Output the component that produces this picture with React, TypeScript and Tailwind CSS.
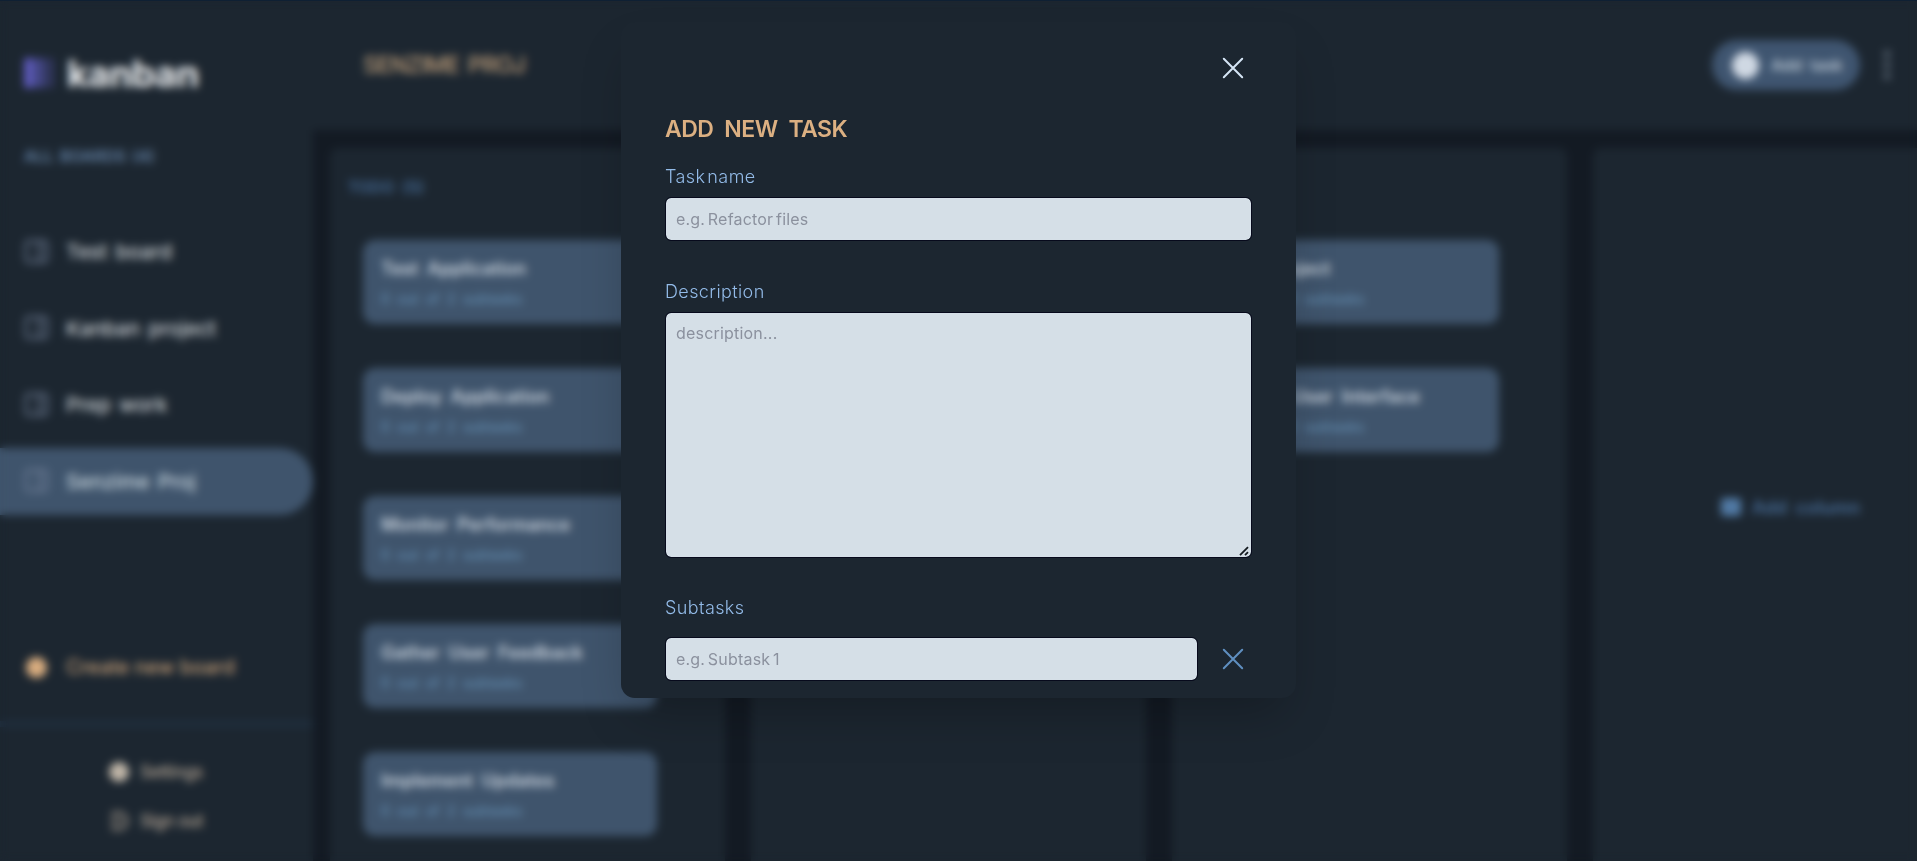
import type { ReactNode } from 'react';

const boards = ['Test board', 'Kanban project', 'Prep work', 'Senzime Proj'];

const todo = [
  'Test Application',
  'Deploy Application',
  'Monitor Performance',
  'Gather User Feedback',
  'Implement Updates',
];

const done = ['Test Project', 'Design User Interface'];

function BoardIcon() {
  return (
    <svg viewBox="0 0 24 24" className="h-6 w-6 shrink-0" fill="none" stroke="#75839c" strokeWidth="2">
      <rect x="2" y="1" width="21" height="21" rx="3" />
      <path d="M15 2v20M19 8v1M19 12v1" />
    </svg>
  );
}

function PlusCircle({ className, fill, cross }: { className: string; fill: string; cross: string }) {
  return (
    <svg viewBox="0 0 24 24" className={className}>
      <circle cx="12" cy="12" r="12" fill={fill} />
      <path d="M12 8v8M8 12h8" stroke={cross} strokeWidth="1.6" />
    </svg>
  );
}

function Close({ color }: { color: string }) {
  return (
    <svg viewBox="0 0 22 22" className="h-[22px] w-[22px]" fill="none" stroke={color} strokeWidth="2" strokeLinecap="round">
      <path d="M1.8 1.8l18.4 18.4M20.2 1.8L1.8 20.2" />
    </svg>
  );
}

function TaskCard({ title }: { title: string }) {
  return (
    <div className="h-[84px] w-[294px] rounded-xl bg-[#3f546c] px-[18px] pt-[15px]">
      <div className="text-[18px] leading-[28px] font-semibold whitespace-nowrap text-[#c9d2dc] [word-spacing:4px]">{title}</div>
      <div className="mt-1 text-[14px] leading-[24px] whitespace-nowrap text-[#6894ba] [word-spacing:3.5px]">0 out of 2 subtasks</div>
    </div>
  );
}

function Column({ title, children }: { title: string; children?: ReactNode }) {
  return (
    <section className="w-[395px] shrink-0 rounded-t-lg bg-[#1c2630] pt-[27px]">
      <h3 className="h-[65px] pl-[18px] text-[16px] leading-[24px] font-semibold text-[#456a94] [word-spacing:4px]">{title}</h3>
      <div className="flex flex-col gap-[44px] pl-[33px]">{children}</div>
    </section>
  );
}

function Sidebar() {
  return (
    <aside className="flex w-[313px] shrink-0 flex-col bg-[#1c2630]">
      <div className="mt-[45px] flex h-[56px] items-center gap-[13px] pl-6">
        <svg viewBox="0 0 30 31" className="h-[30px] w-[30px]">
          <rect width="9" height="31" rx="2" fill="#635fc7" />
          <rect x="10.5" width="9" height="31" rx="2" fill="#635fc7" opacity=".65" />
          <rect x="21" width="9" height="31" rx="2" fill="#635fc7" opacity=".32" />
        </svg>
        <span className="text-[37px] leading-none font-bold tracking-[-0.4px] text-[#f1f3f5]">kanban</span>
      </div>
      <div className="mt-[43px] pl-6 text-[16px] leading-[24px] font-semibold text-[#6482a5] [word-spacing:2px]">ALL BOARDS (4)</div>
      <nav className="mt-[50px] flex flex-col gap-[9.6px]">
        {boards.map((name) => (
          <div
            key={name}
            className={
              name === 'Senzime Proj'
                ? 'flex h-[67px] items-center gap-[18px] rounded-r-full bg-[#3f546c] pl-6 text-[#c9d6de]'
                : 'flex h-[67px] items-center gap-[18px] pl-6 text-[#cbd0d4]'
            }
          >
            <BoardIcon />
            <span className="pt-[2px] text-[20.5px] font-medium tracking-[-0.15px] [word-spacing:3px]">{name}</span>
          </div>
        ))}
      </nav>
      <div className="mt-[119px] flex h-[67px] items-center gap-[19px] pl-[26px] text-[20px] text-[#dcb082]">
        <PlusCircle className="h-[21px] w-[21px]" fill="#dcb082" cross="#c79b6d" />
        <span>Create new board</span>
      </div>
      <div className="mt-[20px] h-[6px] bg-[#1f2e3e]" />
      <div className="mt-[33px] flex flex-col gap-[25px] pl-[109px] text-[17px] leading-[24px] text-[#cdbba6]">
        <div className="flex items-center gap-[11px]">
          <PlusCircle className="h-5 w-5" fill="#c2b8aa" cross="#b7aa98" />
          <span className="tracking-[-0.3px]">Settings</span>
        </div>
        <div className="flex items-center gap-[11px]">
          <svg viewBox="0 0 20 20" className="h-5 w-5" fill="none" stroke="#cdbba6" strokeWidth="1.8">
            <path d="M4 6V2h9l5 5v6l-5 5H4v-4M2 10h11" />
          </svg>
          <span className="tracking-[-0.4px]">Sign out</span>
        </div>
      </div>
    </aside>
  );
}

function Board() {
  return (
    <div className="flex h-[861px] w-full overflow-hidden bg-[#131a23]">
      <Sidebar />
      <main className="flex min-w-0 grow flex-col">
        <header className="flex h-[130px] shrink-0 items-center justify-between bg-[#1c2630] pr-[23px] pl-[50px]">
          <h1 className="pt-[1px] text-[23px] font-medium tracking-[-0.8px] text-[#c0a07c] [word-spacing:3px]">SENZIME PROJ</h1>
          <div className="flex items-center gap-[20px]">
            <div className="flex h-[50px] w-[148px] items-center gap-[12px] rounded-full bg-[#3f5570] pl-[20px] text-[#b9c5d2]">
              <PlusCircle className="h-[27px] w-[27px]" fill="#d5dde7" cross="#b8c6d6" />
              <span className="text-[16px] font-semibold tracking-[-0.1px] [word-spacing:4px]">Add task</span>
            </div>
            <svg viewBox="0 0 14 30" className="h-[30px] w-[14px]" fill="#6f7c8b">
              <circle cx="7" cy="4" r="3" />
              <circle cx="7" cy="15" r="3" />
              <circle cx="7" cy="26" r="3" />
            </svg>
          </div>
        </header>
        <div className="flex grow gap-[26px] overflow-hidden pt-[18px] pl-[17px]">
          <Column title="TODO (5)">
            {todo.map((t) => (
              <TaskCard key={t} title={t} />
            ))}
          </Column>
          <Column title="DOING (0)" />
          <Column title="DONE (2)">
            {done.map((t) => (
              <TaskCard key={t} title={t} />
            ))}
          </Column>
          <div className="flex w-[395px] shrink-0 items-start rounded-t-lg bg-[#1c2630] pt-[347px] pl-[128px] text-[#466a94]">
            <div className="flex items-center gap-[11px]">
              <svg viewBox="0 0 20 18" className="mb-[2px] h-[18px] w-5">
                <rect width="20" height="18" rx="3" fill="#527ba6" />
                <path d="M10 5v8M6 9h8" stroke="#4a709c" strokeWidth="1.5" />
              </svg>
              <span className="text-[18px] leading-[26px] font-semibold [word-spacing:4px]">Add column</span>
            </div>
          </div>
        </div>
      </main>
    </div>
  );
}

const field =
  'block rounded-[6px] border border-[#070a1c] bg-[#d5dfe7] bg-clip-padding pl-[10px] text-[16px] tracking-[0.2px] text-[#1c2630] outline-none placeholder:text-[#8b919e] [word-spacing:-2px]';
const label = 'block text-[18px] leading-[24px] font-light tracking-[0.4px] text-[#93bbe8] [word-spacing:-3.5px]';

function AddTaskModal() {
  return (
    <div className="h-[676px] w-[675px] overflow-hidden rounded-[14px] bg-[#1c2630] pr-[44px] pl-[44px] shadow-2xl">
      <div className="flex justify-end pt-[35px] pr-[8px]">
        <Close color="#d5e5f5" />
      </div>
      <h2 className="mt-[34px] text-[23px] leading-[32px] font-semibold tracking-[-0.5px] text-[#dcb082] [word-spacing:5.5px]">ADD NEW TASK</h2>
      <label className={label + ' mt-[20px]'}>Task name</label>
      <input className={field + ' mt-[8px] h-[44px] w-[587px]'} placeholder="e.g. Refactor files" />
      <label className={label + ' mt-[39px]'}>Description</label>
      <div className="relative mt-[8px] w-[587px]">
        <textarea className={field + ' h-[246px] w-full resize-none pt-[8px]'} placeholder="description..." />
        <svg viewBox="0 0 10 10" className="absolute right-[3px] bottom-[2px] h-[10px] w-[10px]" fill="none" stroke="#141a20" strokeWidth="1.8">
          <path d="M1 9.2L9 1.2M6 9.2L9 6.2" />
        </svg>
      </div>
      <label className={label + ' mt-[38px]'}>Subtasks</label>
      <div className="mt-[17px] flex items-center justify-between pr-[8px]">
        <input className={field + ' h-[44px] w-[533px]'} placeholder="e.g. Subtask 1" />
        <Close color="#5f8fc0" />
      </div>
    </div>
  );
}

export default function App() {
  return (
    <div className="relative h-[861px] w-full overflow-hidden bg-[#1c2630] font-['Inter','Liberation_Sans',sans-serif]">
      <Board />
      <div className="absolute inset-0 flex justify-center border-t border-[#0f2033] pt-[21px] backdrop-blur-[4.5px]">
        <AddTaskModal />
      </div>
    </div>
  );
}
